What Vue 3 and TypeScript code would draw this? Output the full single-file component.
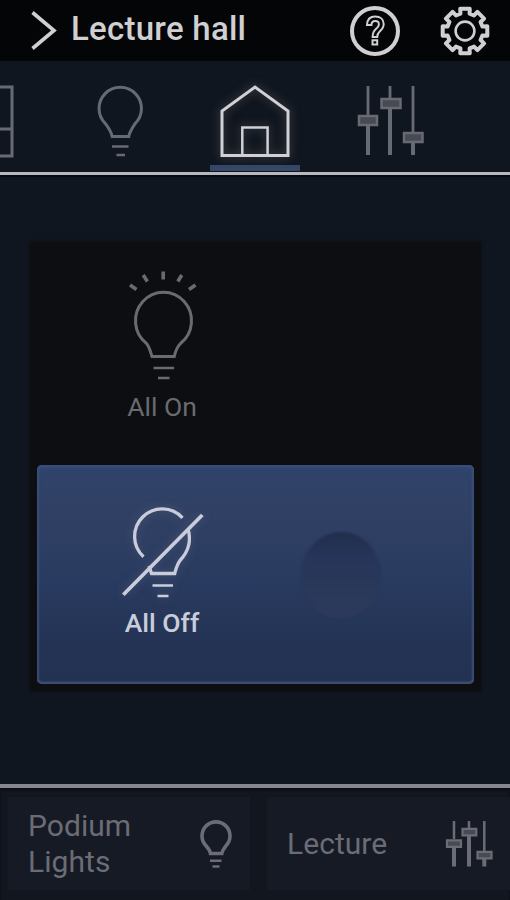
<script setup lang="ts">
import { ref } from 'vue'

type Scene = 'on' | 'off'
const active = ref<Scene>('off')

function gearPath(cx: number, cy: number): string {
  const points: string[] = []
  const tooth: [number, number][] = [
    [18, -14.8],
    [22.8, -12],
    [22.8, 12],
    [18, 14.8],
  ]
  for (let i = 0; i < 8; i++) {
    for (const [r, offset] of tooth) {
      const a = ((i * 45 + offset) * Math.PI) / 180
      points.push(`${(cx + r * Math.sin(a)).toFixed(2)} ${(cy - r * Math.cos(a)).toFixed(2)}`)
    }
  }
  return `M${points.join('L')}Z`
}
const gear = gearPath(26, 26)
</script>

<template>
  <div class="screen">
    <header class="header">
      <svg class="chevron" width="28" height="42" viewBox="0 0 28 42"><path d="M2.5 2.5 24 20.5 2.5 38.5" /></svg>
      <h1 class="title">Lecture hall</h1>
      <svg class="help" width="52" height="52" viewBox="0 0 52 52">
        <circle cx="26" cy="26" r="23" />
        <path class="mark" d="M18 20C18.2 14.2 21.5 11.5 26.2 11.5c5 0 8.5 2.8 8.5 7.4 0 3.4-1.5 5.3-4 7.5-2.1 1.9-2.5 2.8-2.5 5.7h-4.6c0-4 .7-5.7 3.3-8 2.1-1.8 3-2.9 3-4.7 0-2.1-1.3-3.3-3.7-3.3-2.4 0-3.7 1.3-3.8 3.9ZM23.5 35.2h4.7v4.4h-4.7Z" />
      </svg>
      <svg class="settings" width="52" height="52" viewBox="0 0 52 52">
        <path :d="gear" />
        <circle class="hub" cx="26" cy="26" r="9.4" />
      </svg>
    </header>

    <nav class="tabs">
      <div class="tab">
        <svg width="60" height="74" viewBox="0 0 60 74">
          <path d="M2 2H58V71H2ZM2 44H58M30 2V71" />
        </svg>
      </div>
      <div class="tab">
        <svg width="60" height="74" viewBox="0 0 60 74">
          <path d="M22.2 51.5C21.5 47.5 19.5 44 15.6 38.8A21.2 21.2 0 1 1 44.9 38.8C41.5 44 39.5 47 38.8 51.5Z" />
          <path class="fine" d="M22 61.5H38.5M26.5 70H35" />
        </svg>
      </div>
      <div class="tab selected">
        <svg width="76" height="80" viewBox="0 0 76 80">
          <path d="M5 72.5V28L38 4 71 28V72.5Z" />
          <path class="fine" d="M25.3 72V44.5H50.6V72" />
        </svg>
      </div>
      <div class="tab">
        <svg class="sliders" width="70" height="74" viewBox="0 0 70 74">
          <path class="rail thin" d="M13 1V30M35 1V14M58 1V48" />
          <path class="rail" d="M13 38V70M35 22V70M58 56V70" />
          <path class="knob" d="M4 31H22V40H4ZM26.5 14H45.5V23H26.5ZM49 48H67.5V57H49Z" />
        </svg>
      </div>
    </nav>

    <main class="content">
      <section class="panel">
        <button class="scene" :class="{ active: active === 'on' }" @click="active = 'on'">
          <span class="choice">
            <svg width="90" height="118" viewBox="0 0 90 118">
              <path d="M34 89.5C32.5 85 31.5 80 28.5 76.5A28 28.5 0 1 1 62.5 76.5C59 80 57.5 84 56.3 89.5Z" />
              <path class="fine" d="M35.5 101H56M40 111H51.5" />
              <path class="ray" d="M12 18l6.5 4.5M25.2 8l4.2 6.5M45.2 4.5v8M63.8 8l-4 6.5M77.5 18l-6.5 4.5" />
            </svg>
            <span class="label">All On</span>
          </span>
        </button>
        <button class="scene" :class="{ active: active === 'off' }" @click="active = 'off'">
          <span class="choice">
            <svg width="90" height="118" viewBox="0 0 90 118">
              <path d="M64.5 21.8A27.6 27.6 0 1 0 25.5 60.8M70 33C73.5 45 70 56 62 64.5 59 68.5 58 73 56.7 77.5H33.5L31 70" />
              <path class="fine" d="M34.5 89.5H55M39.5 100H50.5" />
              <path class="slash" d="M5.3 98.7 84.3 19" />
            </svg>
            <span class="label">All Off</span>
          </span>
          <span class="dimple"></span>
        </button>
      </section>
    </main>

    <footer class="shortcuts">
      <button class="shortcut podium">
        <span class="name">Podium Lights</span>
        <svg width="36" height="50" viewBox="0 0 36 50">
          <path d="M12.5 34.5C12 31 10.5 29.5 7.8 26.5A14 14 0 1 1 28.2 26.5C25.8 29.5 24.5 31 23.8 34.5Z" />
          <path class="fine" d="M12 41.8H23.5M14.5 47.5H21.5" />
        </svg>
      </button>
      <button class="shortcut lecture">
        <span class="name">Lecture</span>
        <svg class="sliders" width="50" height="50" viewBox="0 0 50 50">
          <path class="rail thin" d="M10 2V20M25 2V10M40.3 2V32" />
          <path class="rail" d="M10 28V47.5M25 16V47.5M40.3 40V47.5" />
          <path class="knob" d="M3 21.3H17V27.8H3ZM18.5 9.8H32.3V16.3H18.5ZM33.5 32.8H47.5V39.3H33.5Z" />
        </svg>
      </button>
    </footer>
  </div>
</template>

<style>
body {
  margin: 0;
  background: #10161f;
}
</style>

<style scoped>
.screen {
  display: flex;
  flex-direction: column;
  width: 510px;
  height: 900px;
  overflow: hidden;
  background: #10161f;
  font-family: Roboto, "Liberation Sans", sans-serif;
}
svg {
  display: block;
  flex: none;
  fill: none;
  stroke: currentColor;
  stroke-width: 3;
}
button {
  border: 0;
  margin: 0;
  font-family: inherit;
  text-align: left;
}
.header {
  display: flex;
  align-items: center;
  box-sizing: border-box;
  flex: none;
  height: 61px;
  padding: 0 19px 0 30px;
  background: #040506;
  color: #d0d0d2;
}
.chevron {
  stroke-width: 3.6;
}
.title {
  flex: 1;
  margin: 0 0 4px 13px;
  font-size: 33px;
  font-weight: 500;
  line-height: 36px;
  letter-spacing: 0.25px;
  white-space: nowrap;
}
.help {
  margin-right: 38px;
  stroke-width: 4;
}
.mark {
  stroke-width: 2;
}
.settings {
  stroke-width: 4;
  stroke-linejoin: round;
}
.hub {
  stroke-width: 2.6;
}
.tabs {
  display: flex;
  flex: none;
  height: 110px;
  padding-bottom: 1px;
  border-bottom: 3px solid #b7b7be;
  box-shadow: 0 2px 1px #080a12;
  margin-left: -82px;
  color: #686a73;
}
.tab {
  display: flex;
  flex: none;
  justify-content: center;
  width: 135px;
  padding-top: 24px;
  box-sizing: border-box;
}
.tab:first-child {
  margin-right: -1px;
}
.tab:first-child svg {
  margin-right: 4px;
}
.fine {
  stroke-width: 2.5;
}
.tab.selected {
  width: 90px;
  margin: 0 22px 0 23px;
  padding-top: 22px;
  border-bottom: 6px solid #354668;
  color: #d0d0d5;
}
.selected svg {
  filter: drop-shadow(0 0 5px #55525b);
}
.sliders .rail {
  stroke-width: 4;
}
.sliders .rail.thin {
  stroke-width: 2.8;
}
.sliders .knob {
  fill: #484a52;
  stroke-width: 2.5;
}
.content {
  flex: 1;
  padding: 67px 29px 0 30px;
}
.panel {
  display: flex;
  flex-direction: column;
  box-sizing: border-box;
  height: 449px;
  padding: 5px 7px 6px;
  background: #0c0e11;
  box-shadow: 0 0 3px #0c0e11;
}
.scene {
  position: relative;
  display: flex;
  box-sizing: border-box;
  width: 437px;
  height: 218px;
  padding: 20px 81px;
  border-radius: 5px;
  background: transparent;
  color: #6a6b6d;
}
.scene.active {
  height: 219px;
  padding-top: 31px;
  background: linear-gradient(#304369, #304064 25%, #293b60 52%, #243354 82%, #243252);
  box-shadow: inset 0 0 2px 2px #3b4e78, inset 0 7px 7px -4px #304b7d, inset 0 -2px 1px #47476d;
  color: #c9cddb;
}
.choice {
  display: flex;
  flex-direction: column;
  align-items: center;
  width: 90px;
}
.label {
  margin: 5px 2px 0 0;
  font-size: 26.5px;
  line-height: 34px;
  white-space: nowrap;
}
.active .label {
  margin: -8px 2px 0 0;
  font-size: 26.5px;
  font-weight: 500;
}
.ray {
  stroke-width: 3.6;
}
.slash {
  stroke-width: 3.7;
}
.active svg {
  stroke-width: 3.3;
  filter: drop-shadow(0 0 4px #64678388);
}
.dimple {
  width: 80px;
  height: 86px;
  margin: 36px 0 0 93px;
  flex: none;
  border-radius: 50%;
  background: linear-gradient(#222e4d 0%, #26355a 32%, #293858 60%, #2b395b 78%, #2d3a5c 100%);
  filter: blur(1px);
}
.shortcuts {
  display: flex;
  flex: none;
  gap: 17px;
  box-sizing: border-box;
  height: 116px;
  padding: 9px 0 10px 8px;
  border-top: 4px solid #85868f;
  box-shadow: inset 0 2px 2px #0b0d15;
  background: #11161f;
}
.shortcut {
  display: flex;
  align-items: center;
  justify-content: space-between;
  flex: none;
  box-sizing: border-box;
  width: 242px;
  padding: 0 16px 0 20px;
  background: #161a24;
  color: #6b6c75;
}
.shortcut.lecture {
  width: 243px;
  padding-right: 16px;
}
.name {
  width: 110px;
  font-size: 30px;
  line-height: 36px;
  letter-spacing: 0.05px;
}
.podium svg {
  stroke-width: 3.6;
}
.shortcut .sliders .rail {
  stroke-width: 4;
}
.shortcut .sliders .rail.thin {
  stroke-width: 2.5;
}
.shortcut .sliders .knob {
  stroke-width: 2.2;
}
</style>
